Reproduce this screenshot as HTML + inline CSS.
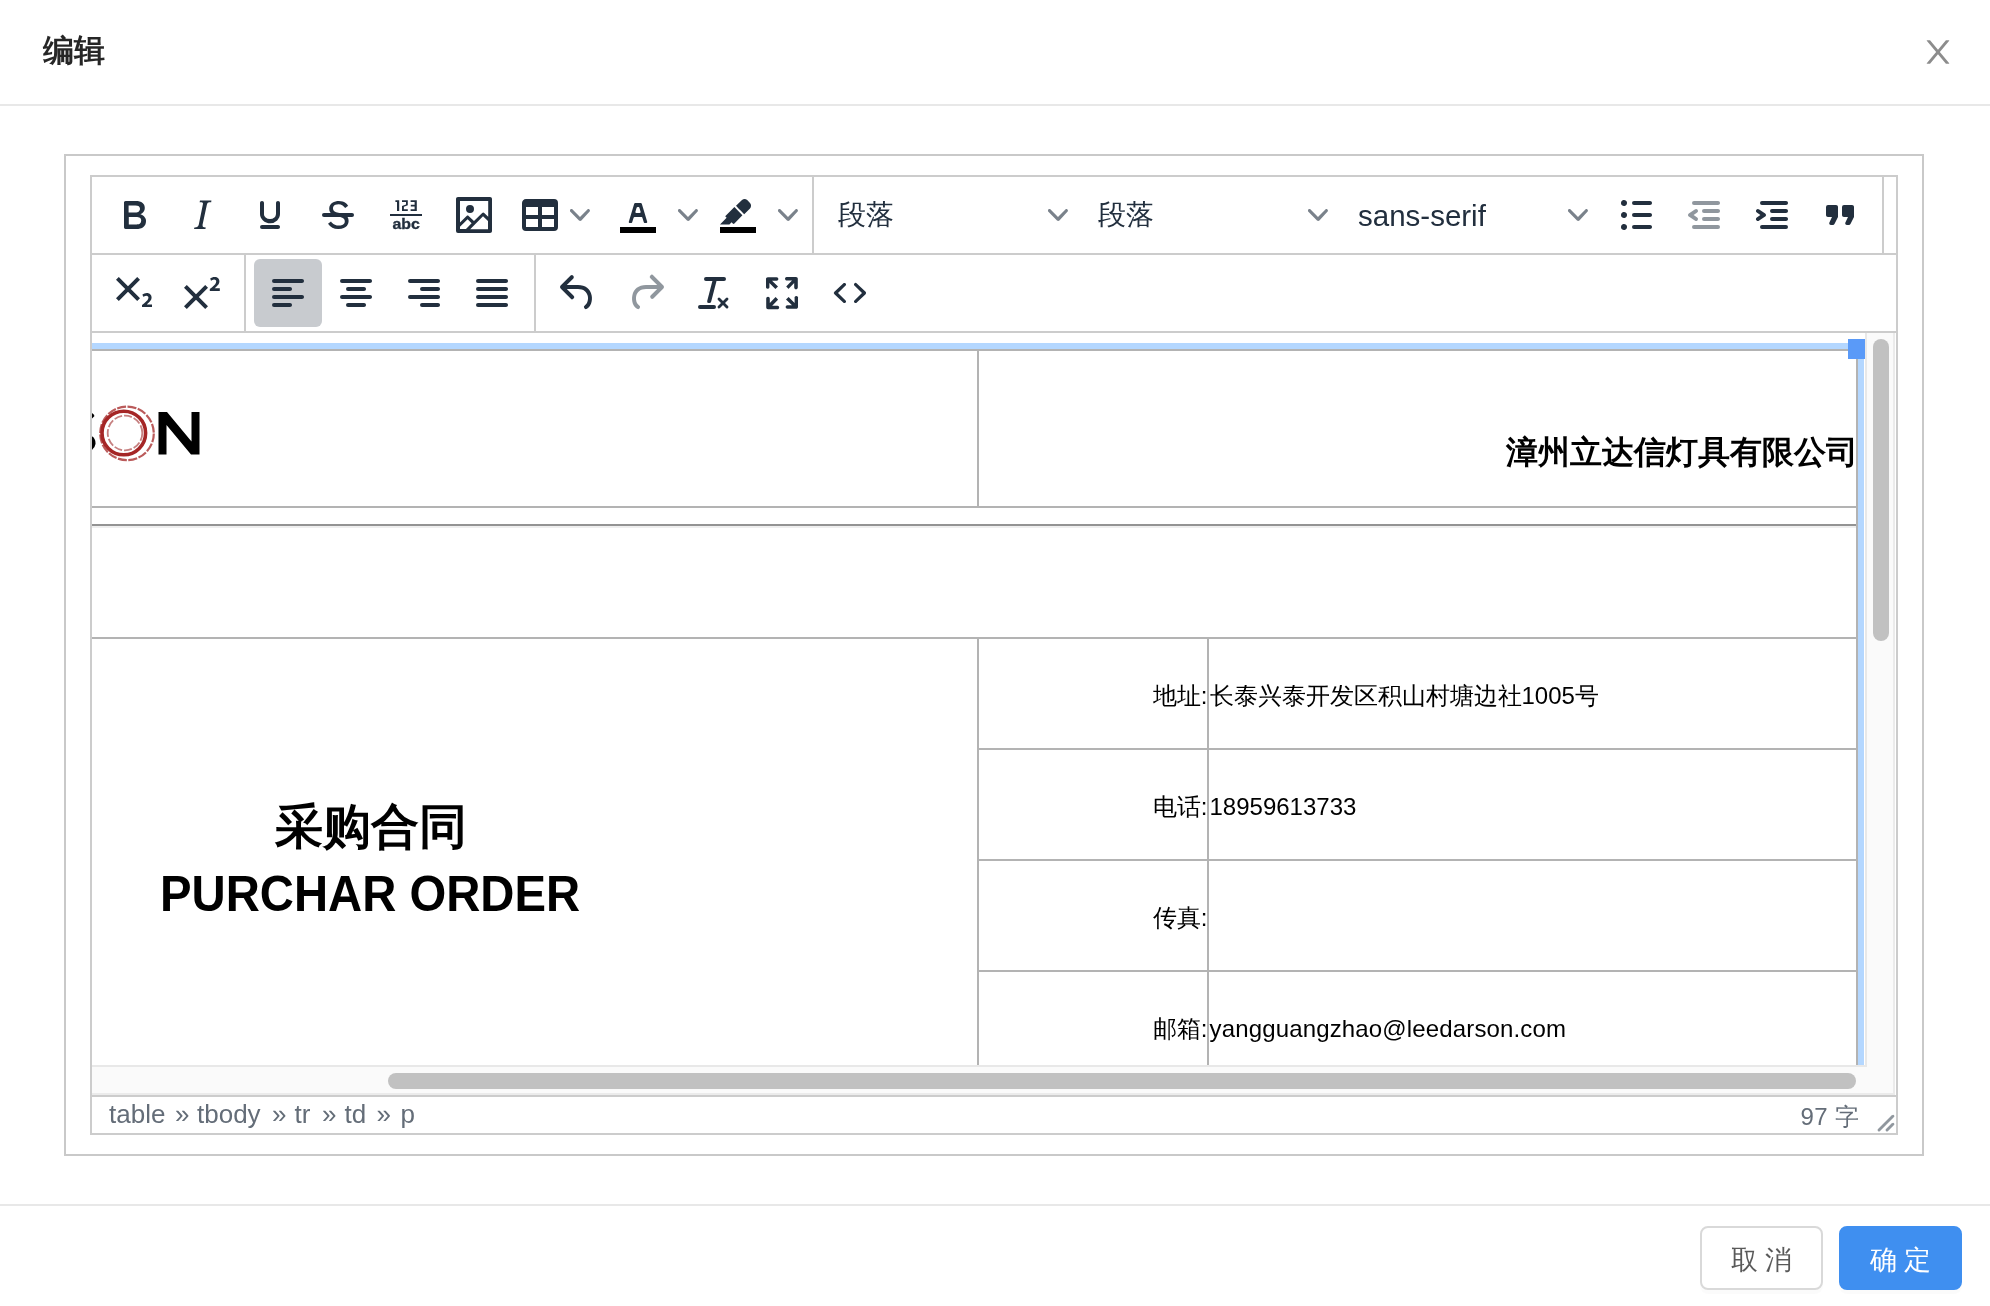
<!DOCTYPE html>
<html><head><meta charset="utf-8"><title>编辑</title>
<style>
html,body{margin:0;padding:0}
body{width:1990px;height:1306px;background:#fff;position:relative;overflow:hidden;font-family:"Liberation Sans",sans-serif;}
#wrap{position:absolute;left:0;top:0;width:1990px;height:1306px;will-change:transform}
.a{position:absolute}
.ln{position:absolute;background:#ccc}
.ic{position:absolute;width:48px;height:48px;fill:#222f3e}
.ic.dis{fill:rgba(34,47,62,.5)}
.chev{position:absolute;width:20px;height:20px;fill:#7a828b}
.lbl{position:absolute;font-size:28px;color:#222f3e;white-space:nowrap;line-height:40px}
#title{left:43px;top:29px;font-size:31px;font-weight:bold;color:rgba(0,0,0,.85);line-height:44px}
.btn{position:absolute;top:1226px;height:64px;box-sizing:border-box;border-radius:8px;font-size:26.5px;font-weight:500;text-align:center;line-height:64px;box-shadow:0 4px 0 rgba(0,0,0,.015)}
#content{position:absolute;left:92px;top:333px;width:1773px;height:732px;overflow:hidden;background:#fff}
#content .t{position:absolute;white-space:nowrap;color:#000}
.tl{position:absolute;background:#b3b3b3}
.cell{position:absolute;font-size:24px;line-height:34px;color:#000;white-space:nowrap}
.sbw{position:absolute;top:1097px;height:36px;line-height:34px;font-size:26px;color:#646d78;white-space:nowrap}
</style></head>
<body><div id="wrap">
<!-- header -->
<div id="title" class="a">编辑</div>
<svg class="a" style="left:1922px;top:36px;width:32px;height:32px;fill:rgba(0,0,0,.45)" viewBox="64 64 896 896"><path d="M563.8 512l262.5-312.9c4.4-5.2.7-13.1-6.1-13.1h-79.8c-4.7 0-9.2 2.1-12.3 5.7L511.6 449.8 295.1 191.7c-3-3.6-7.5-5.7-12.3-5.7H203c-6.8 0-10.5 7.9-6.1 13.1L459.4 512 196.9 824.9A7.95 7.95 0 0 0 203 838h79.8c4.7 0 9.2-2.1 12.3-5.7l216.5-258.1 216.5 258.1c3 3.6 7.5 5.7 12.3 5.7h79.8c6.8 0 10.5-7.9 6.1-13.1L563.8 512z"/></svg>
<div class="ln" style="left:0;top:104px;width:1990px;height:2px;background:#e8e8e8"></div>

<!-- outer box -->
<div class="a" style="left:64px;top:154px;width:1860px;height:1002px;box-sizing:border-box;border:2px solid #c9c9c9"></div>
<!-- tinymce box -->
<div class="a" style="left:90px;top:175px;width:1808px;height:960px;box-sizing:border-box;border:2px solid #ccc"></div>

<!-- TOOLBAR -->
<div class="ln" style="left:92px;top:253px;width:1804px;height:2px"></div>
<div class="ln" style="left:92px;top:331px;width:1804px;height:2px"></div>
<div class="ln" style="left:812px;top:177px;width:2px;height:76px"></div>
<div class="ln" style="left:1882px;top:177px;width:2px;height:76px"></div>
<div class="ln" style="left:244px;top:255px;width:2px;height:76px"></div>
<div class="ln" style="left:534px;top:255px;width:2px;height:76px"></div>
<!--TB--><svg class="ic" style="left:110px;top:191px" viewBox="0 0 24 24"><path d="M7.8 19c-.3 0-.5 0-.6-.2l-.2-.5V5.7c0-.2 0-.4.2-.5l.6-.2h5c1.5 0 2.7.3 3.5 1 .7.6 1.1 1.4 1.1 2.5a3 3 0 01-.6 1.9c-.4.6-1 1-1.6 1.2.4.1.9.3 1.3.6s.8.7 1 1.2c.4.4.5 1 .5 1.6 0 1.3-.4 2.3-1.3 3-.8.7-2.1 1-3.8 1H7.8zm5-8.3c.6 0 1.2-.1 1.6-.5.4-.3.6-.7.6-1.3 0-1.1-.8-1.7-2.3-1.7H9.3v3.5h3.4zm.5 6c.7 0 1.3-.1 1.7-.4.4-.4.6-.9.6-1.5s-.2-1-.7-1.4c-.4-.3-1-.4-2-.4H9.4v3.8h4z" fill-rule="evenodd"/></svg>
<svg class="ic" style="left:178px;top:191px" viewBox="0 0 24 24"><path d="M16.7 4.7l-.1.9h-.3c-.6 0-1 0-1.4.3-.3.3-.4.6-.5 1.1l-2.1 9.8v.6c0 .5.4.8 1.4.8h.2l-.2.8H8l.2-.8h.2c1.1 0 1.8-.5 2-1.5l2-9.8.1-.5c0-.6-.4-.8-1.4-.8h-.3l.2-.9h5.8z" fill-rule="evenodd"/></svg>
<svg class="ic" style="left:246px;top:191px" viewBox="0 0 24 24"><path d="M16 5c.6 0 1 .4 1 1v5.5a4 4 0 01-.4 1.8l-1 1.4a5.3 5.3 0 01-5.5 1 5 5 0 01-1.6-1c-.5-.4-.8-.9-1.1-1.4a4 4 0 01-.4-1.8V6c0-.6.4-1 1-1s1 .4 1 1v5.5c0 .3 0 .6.2 1l.6.7a3.3 3.3 0 002.2.8 3.4 3.4 0 002.2-.8c.3-.2.5-.5.6-.8l.2-.9V6c0-.6.4-1 1-1zM8 17h8c.6 0 1 .4 1 1s-.4 1-1 1H8a1 1 0 010-2z" fill-rule="evenodd"/></svg>
<svg class="ic" style="left:314px;top:191px" viewBox="0 0 24 24"><g fill-rule="evenodd"><path d="M15.6 8.5c-.5-.7-1-1.1-1.3-1.3-.6-.4-1.3-.6-2-.6-2.7 0-2.8 1.7-2.8 2.1 0 1.6 1.8 2 3.2 2.3 4.4.9 4.6 2.8 4.6 3.9 0 1.4-.7 4.1-5 4.1A6.2 6.2 0 017 16.4l1.5-1.1c.4.6 1.6 2 3.7 2 1.6 0 2.5-.4 3-1.2.4-.8.3-2-.8-2.6-.7-.4-1.6-.7-2.9-1-1-.2-3.9-.8-3.9-3.6C7.6 6 10.3 5 12.4 5c2.9 0 4.2 1.6 4.7 2.4l-1.5 1.1z"/><path d="M5 11h14a1 1 0 010 2H5a1 1 0 010-2z" fill-rule="nonzero"/></g></svg>
<svg class="ic" style="left:382px;top:191px" viewBox="0 0 24 24"><g><path d="M4 11.5h16v1H4z"/><path d="M6.7 4.65H8.6V9.95H7.5V5.5H6.7Z"/><path d="M10 4.6H12.9V7.1L10.95 7.9V9.1H12.9V9.95H10V7.5L12 6.7V5.5H10Z"/><path d="M14.3 4.6H17.4V9.95H14.3V9.1H16.3V7.75H14.4V6.9H16.3V5.5H14.3Z"/><text transform="translate(12.05 19) scale(1.12 1)" text-anchor="middle" font-family="Liberation Sans" font-weight="bold" font-size="7.1" stroke="#222f3e" stroke-width=".15">abc</text></g></svg>
<svg class="ic" style="left:450px;top:191px" viewBox="0 0 24 24"><path d="M5 15.7l3.3-3.2c.3-.3.7-.3 1 0L12 15l4.1-4c.3-.4.8-.4 1 0l2 1.9V5H5v10.7zM5 18V19h3l2.8-2.9-2-2L5 17.9zm14-3l-2.5-2.4-6.4 6.5H19v-4zM4 3h16c.6 0 1 .4 1 1v16c0 .6-.4 1-1 1H4a1 1 0 01-1-1V4c0-.6.4-1 1-1zm6 8a2 2 0 100-4 2 2 0 000 4z" fill-rule="nonzero"/></svg>
<svg class="ic" style="left:516px;top:191px" viewBox="0 0 24 24"><path d="M19 4a2 2 0 012 2v12a2 2 0 01-2 2H5a2 2 0 01-2-2V6c0-1.1.9-2 2-2h14zM5 14v4h6v-4H5zm14 0h-6v4h6v-4zm0-6h-6v4h6V8zM5 12h6V8H5v4z" fill-rule="nonzero"/></svg>
<svg class="chev" style="left:570px;top:205px" viewBox="0 0 10 10"><path d="M8.7 2.2c.3-.3.8-.3 1 0 .4.4.4.9 0 1.2L5.7 7.8c-.3.3-.9.3-1.2 0L.2 3.4a.8.8 0 010-1.2c.3-.3.8-.3 1.1 0L5 6l3.7-3.8z" fill-rule="nonzero"/></svg>
<svg class="ic" style="left:614px;top:191px" viewBox="0 0 24 24"><g fill-rule="evenodd"><path d="M3 18h18v3H3z" fill="#000"/><path d="M8.7 16h-.8a.5.5 0 01-.5-.6l2.7-9c.1-.3.3-.4.5-.4h2.8c.2 0 .4.1.5.4l2.7 9a.5.5 0 01-.5.6h-.8a.5.5 0 01-.4-.4l-.7-2.2c0-.3-.3-.4-.5-.4h-3.4c-.2 0-.4.1-.5.4l-.7 2.2c0 .3-.2.4-.4.4zm2.6-7.6l-.6 2a.5.5 0 00.5.6h1.6a.5.5 0 00.5-.6l-.6-2c0-.3-.3-.4-.5-.4h-.4c-.2 0-.4.1-.5.4z"/></g></svg>
<svg class="chev" style="left:678px;top:205px" viewBox="0 0 10 10"><path d="M8.7 2.2c.3-.3.8-.3 1 0 .4.4.4.9 0 1.2L5.7 7.8c-.3.3-.9.3-1.2 0L.2 3.4a.8.8 0 010-1.2c.3-.3.8-.3 1.1 0L5 6l3.7-3.8z" fill-rule="nonzero"/></svg>
<svg class="ic" style="left:714px;top:191px" viewBox="0 0 24 24"><g fill-rule="evenodd"><path d="M3 18h18v3H3z" fill="#000"/><path fill-rule="nonzero" d="M7.7 16.7H3l3.3-3.3-.7-.8L10.2 8l4 4.1-4 4.2c-.2.2-.6.2-.8 0l-.6-.7-1.1 1.1zm5-7.5L11 7.4l3-2.9a2 2 0 012.6 0L18 6c.7.7.7 2 0 2.7l-2.9 2.9-1.8-1.8-.5-.6"/></g></svg>
<svg class="chev" style="left:778px;top:205px" viewBox="0 0 10 10"><path d="M8.7 2.2c.3-.3.8-.3 1 0 .4.4.4.9 0 1.2L5.7 7.8c-.3.3-.9.3-1.2 0L.2 3.4a.8.8 0 010-1.2c.3-.3.8-.3 1.1 0L5 6l3.7-3.8z" fill-rule="nonzero"/></svg>
<svg class="chev" style="left:1048px;top:205px" viewBox="0 0 10 10"><path d="M8.7 2.2c.3-.3.8-.3 1 0 .4.4.4.9 0 1.2L5.7 7.8c-.3.3-.9.3-1.2 0L.2 3.4a.8.8 0 010-1.2c.3-.3.8-.3 1.1 0L5 6l3.7-3.8z" fill-rule="nonzero"/></svg>
<svg class="chev" style="left:1308px;top:205px" viewBox="0 0 10 10"><path d="M8.7 2.2c.3-.3.8-.3 1 0 .4.4.4.9 0 1.2L5.7 7.8c-.3.3-.9.3-1.2 0L.2 3.4a.8.8 0 010-1.2c.3-.3.8-.3 1.1 0L5 6l3.7-3.8z" fill-rule="nonzero"/></svg>
<svg class="chev" style="left:1568px;top:205px" viewBox="0 0 10 10"><path d="M8.7 2.2c.3-.3.8-.3 1 0 .4.4.4.9 0 1.2L5.7 7.8c-.3.3-.9.3-1.2 0L.2 3.4a.8.8 0 010-1.2c.3-.3.8-.3 1.1 0L5 6l3.7-3.8z" fill-rule="nonzero"/></svg>
<div class="lbl" style="left:838px;top:195px">段落</div>
<div class="lbl" style="left:1098px;top:195px">段落</div>
<div class="lbl" style="left:1358px;top:196px;font-size:29.5px">sans-serif</div>
<svg class="ic" style="left:1612px;top:191px" viewBox="0 0 24 24"><path d="M11 5h8c.6 0 1 .4 1 1s-.4 1-1 1h-8a1 1 0 010-2zm0 6h8c.6 0 1 .4 1 1s-.4 1-1 1h-8a1 1 0 010-2zm0 6h8c.6 0 1 .4 1 1s-.4 1-1 1h-8a1 1 0 010-2zM4.5 6c0-.4.1-.8.4-1 .3-.4.7-.5 1.1-.5.4 0 .8.1 1 .4.4.3.5.7.5 1.1 0 .4-.1.8-.4 1-.3.4-.7.5-1.1.5-.4 0-.8-.1-1-.4-.4-.3-.5-.7-.5-1.1zm0 6c0-.4.1-.8.4-1 .3-.4.7-.5 1.1-.5.4 0 .8.1 1 .4.4.3.5.7.5 1.1 0 .4-.1.8-.4 1-.3.4-.7.5-1.1.5-.4 0-.8-.1-1-.4-.4-.3-.5-.7-.5-1.1zm0 6c0-.4.1-.8.4-1 .3-.4.7-.5 1.1-.5.4 0 .8.1 1 .4.4.3.5.7.5 1.1 0 .4-.1.8-.4 1-.3.4-.7.5-1.1.5-.4 0-.8-.1-1-.4-.4-.3-.5-.7-.5-1.1z" fill-rule="evenodd"/></svg>
<svg class="ic dis" style="left:1680px;top:191px" viewBox="0 0 24 24"><path d="M7 5h12c.6 0 1 .4 1 1s-.4 1-1 1H7a1 1 0 110-2zm5 4h7c.6 0 1 .4 1 1s-.4 1-1 1h-7a1 1 0 010-2zm0 4h7c.6 0 1 .4 1 1s-.4 1-1 1h-7a1 1 0 010-2zm-5 4h12a1 1 0 010 2H7a1 1 0 010-2zm1.6-3.8a1 1 0 01-1.2 1.6l-3-2a1 1 0 010-1.6l3-2a1 1 0 011.2 1.6L6.8 12l1.8 1.2z" fill-rule="evenodd"/></svg>
<svg class="ic" style="left:1748px;top:191px" viewBox="0 0 24 24"><path d="M7 5h12c.6 0 1 .4 1 1s-.4 1-1 1H7a1 1 0 110-2zm5 4h7c.6 0 1 .4 1 1s-.4 1-1 1h-7a1 1 0 010-2zm0 4h7c.6 0 1 .4 1 1s-.4 1-1 1h-7a1 1 0 010-2zm-5 4h12a1 1 0 010 2H7a1 1 0 010-2zm-2.6-3.8L6.2 12l-1.8-1.2a1 1 0 011.2-1.6l3 2a1 1 0 010 1.6l-3 2a1 1 0 11-1.2-1.6z" fill-rule="evenodd"/></svg>
<svg class="ic" style="left:1816px;top:191px" viewBox="0 0 24 24"><path d="M7.5 17h.9c.4 0 .7-.2.9-.6L11 13V8c0-.6-.4-1-1-1H6a1 1 0 00-1 1v4c0 .6.4 1 1 1h2l-1.3 2.7a1 1 0 00.8 1.3zm8 0h.9c.4 0 .7-.2.9-.6L19 13V8c0-.6-.4-1-1-1h-4a1 1 0 00-1 1v4c0 .6.4 1 1 1h2l-1.3 2.7a1 1 0 00.8 1.3z" fill-rule="nonzero"/></svg>
<div class="a" style="left:254px;top:259px;width:68px;height:68px;border-radius:6px;background:#c8cbcf"></div>
<svg class="ic" style="left:110px;top:269px" viewBox="0 0 24 24"><path d="M10.4 10l4.6 4.6-1.4 1.4L9 11.4 4.4 16 3 14.6 7.6 10 3 5.4 4.4 4 9 8.6 13.6 4 15 5.4 10.4 10zM21 19h-5v-1l1-.8 1.7-1.6c.3-.4.5-.8.5-1.2 0-.3 0-.6-.2-.7-.2-.2-.5-.3-.9-.3a2 2 0 00-.8.2l-.7.3-.4-1.1 1-.6 1.2-.2c.8 0 1.4.3 1.8.7.4.4.6.9.6 1.5s-.2 1.1-.5 1.6a8 8 0 01-1.3 1.3l-.6.6h2.6V19z" fill-rule="nonzero"/></svg>
<svg class="ic" style="left:178px;top:269px" viewBox="0 0 24 24"><path d="M15 9.4L10.4 14l4.6 4.6-1.4 1.4L9 15.4 4.4 20 3 18.6 7.6 14 3 9.4 4.4 8 9 12.6 13.6 8 15 9.4zm5.9 1.6h-5v-1l1-.8 1.7-1.6c.3-.5.5-.9.5-1.3 0-.3 0-.5-.2-.7-.2-.2-.5-.3-.9-.3l-.8.2-.7.4-.4-1.2c.2-.2.5-.4 1-.5.3-.2.8-.2 1.2-.2.8 0 1.4.2 1.8.6.4.4.6 1 .6 1.6 0 .5-.2 1-.5 1.5l-1.3 1.4-.6.5h2.6V11z" fill-rule="nonzero"/></svg>
<svg class="ic" style="left:264px;top:269px" viewBox="0 0 24 24"><path d="M5 5h14c.6 0 1 .4 1 1s-.4 1-1 1H5a1 1 0 110-2zm0 4h8c.6 0 1 .4 1 1s-.4 1-1 1H5a1 1 0 110-2zm0 8h8c.6 0 1 .4 1 1s-.4 1-1 1H5a1 1 0 010-2zm0-4h14c.6 0 1 .4 1 1s-.4 1-1 1H5a1 1 0 010-2z" fill-rule="evenodd"/></svg>
<svg class="ic" style="left:332px;top:269px" viewBox="0 0 24 24"><path d="M5 5h14c.6 0 1 .4 1 1s-.4 1-1 1H5a1 1 0 110-2zm3 4h8c.6 0 1 .4 1 1s-.4 1-1 1H8a1 1 0 110-2zm0 8h8c.6 0 1 .4 1 1s-.4 1-1 1H8a1 1 0 010-2zm-3-4h14c.6 0 1 .4 1 1s-.4 1-1 1H5a1 1 0 010-2z" fill-rule="evenodd"/></svg>
<svg class="ic" style="left:400px;top:269px" viewBox="0 0 24 24"><path d="M5 5h14c.6 0 1 .4 1 1s-.4 1-1 1H5a1 1 0 110-2zm6 4h8c.6 0 1 .4 1 1s-.4 1-1 1h-8a1 1 0 010-2zm0 8h8c.6 0 1 .4 1 1s-.4 1-1 1h-8a1 1 0 010-2zm-6-4h14c.6 0 1 .4 1 1s-.4 1-1 1H5a1 1 0 010-2z" fill-rule="evenodd"/></svg>
<svg class="ic" style="left:468px;top:269px" viewBox="0 0 24 24"><path d="M5 5h14c.6 0 1 .4 1 1s-.4 1-1 1H5a1 1 0 110-2zm0 4h14c.6 0 1 .4 1 1s-.4 1-1 1H5a1 1 0 110-2zm0 4h14c.6 0 1 .4 1 1s-.4 1-1 1H5a1 1 0 010-2zm0 4h14c.6 0 1 .4 1 1s-.4 1-1 1H5a1 1 0 010-2z" fill-rule="evenodd"/></svg>
<svg class="ic" style="left:554px;top:269px" viewBox="0 0 24 24"><path d="M6.4 8H12c3.7 0 6.2 2 6.8 5.1.6 2.7-.4 5.6-2.3 6.8a1 1 0 01-1-1.8c1.1-.6 1.8-2.7 1.4-4.6-.5-2.1-2.1-3.5-4.9-3.5H6.4l3.3 3.3a1 1 0 11-1.4 1.4l-5-5a1 1 0 010-1.4l5-5a1 1 0 011.4 1.4L6.4 8z" fill-rule="nonzero"/></svg>
<svg class="ic dis" style="left:622px;top:269px" viewBox="0 0 24 24"><path d="M17.6 10H12c-2.8 0-4.4 1.4-4.9 3.5-.4 2 .3 4 1.4 4.6a1 1 0 11-1 1.8c-2-1.2-2.9-4.1-2.3-6.8.6-3 3-5.1 6.8-5.1h5.6l-3.3-3.3a1 1 0 111.4-1.4l5 5a1 1 0 010 1.4l-5 5a1 1 0 01-1.4-1.4l3.3-3.3z" fill-rule="nonzero"/></svg>
<svg class="ic" style="left:690px;top:269px" viewBox="0 0 24 24"><path d="M13.2 6a1 1 0 010 .2l-2.6 10a1 1 0 01-1 .8h-.2a.8.8 0 01-.8-1l2.6-10H8a1 1 0 110-2h9a1 1 0 010 2h-3.8zM5 18h7a1 1 0 010 2H5a1 1 0 010-2zm13 1.5L16.5 18 15 19.5a.7.7 0 01-1-1l1.5-1.5-1.5-1.5a.7.7 0 011-1l1.5 1.5 1.5-1.5a.7.7 0 011 1L17.5 17l1.5 1.5a.7.7 0 01-1 1z" fill-rule="evenodd"/></svg>
<svg class="ic" style="left:758px;top:269px" viewBox="0 0 24 24"><path d="M15.3 10l-1.2-1.3 2.9-3h-2.3a.9.9 0 110-1.7H19c.5 0 .9.4.9.9v4.4a.9.9 0 11-1.8 0V7l-2.9 3zm0 4l3 3v-2.3a.9.9 0 111.7 0V19c0 .5-.4.9-.9.9h-4.4a.9.9 0 110-1.8H17l-3-2.9 1.3-1.2zM10 15.4l-2.9 3h2.3a.9.9 0 110 1.7H5a.9.9 0 01-.9-.9v-4.4a.9.9 0 111.8 0V17l2.9-3 1.2 1.3zM8.7 10L5.7 7v2.3a.9.9 0 01-1.7 0V5c0-.5.4-.9.9-.9h4.4a.9.9 0 010 1.8H7l3 2.9-1.3 1.2z" fill-rule="nonzero"/></svg>
<svg class="ic" style="left:826px;top:269px" viewBox="0 0 24 24"><g fill-rule="nonzero"><path d="M9.8 15.7c.3.3.3.8 0 1-.3.4-.9.4-1.2 0l-4.4-4.1a.8.8 0 010-1.2l4.4-4.2c.3-.3.9-.3 1.2 0 .3.3.3.8 0 1.1L6 12l3.8 3.7zM14.2 15.7c-.3.3-.3.8 0 1 .4.4.9.4 1.2 0l4.4-4.1c.3-.3.3-.9 0-1.2l-4.4-4.2a.8.8 0 00-1.2 0c-.3.3-.3.8 0 1.1L18 12l-3.8 3.7z"/></g></svg><!--/TB-->

<!-- CONTENT -->
<div id="content">
<!--CT--><div class="a" style="left:0px;top:10px;width:1772px;height:6px;background:#b4d7ff"></div>
<div class="a" style="left:1766px;top:10px;width:6px;height:722px;background:#b4d7ff"></div>
<div class="a" style="left:0px;top:16px;width:1766px;height:2px;background:#b3b3b3"></div>
<div class="a" style="left:1764px;top:16px;width:2px;height:716px;background:#b3b3b3"></div>
<div class="a" style="left:0px;top:173px;width:1764px;height:2px;background:#b3b3b3"></div>
<div class="a" style="left:885px;top:18px;width:2px;height:155px;background:#b3b3b3"></div>
<div class="a" style="left:0px;top:191px;width:1764px;height:2px;background:#939393"></div>
<div class="a" style="left:0px;top:193px;width:1764px;height:2px;background:#efefef"></div>
<div class="a" style="left:0px;top:304px;width:1764px;height:2px;background:#b3b3b3"></div>
<div class="a" style="left:885px;top:306px;width:2px;height:426px;background:#b3b3b3"></div>
<div class="a" style="left:1115px;top:306px;width:2px;height:426px;background:#b3b3b3"></div>
<div class="a" style="left:887px;top:415px;width:877px;height:2px;background:#b3b3b3"></div>
<div class="a" style="left:887px;top:526px;width:877px;height:2px;background:#b3b3b3"></div>
<div class="a" style="left:887px;top:637px;width:877px;height:2px;background:#b3b3b3"></div>
<div class="a" style="left:1756px;top:6px;width:20px;height:20px;background:#5a9af8"></div>
<svg class="a" style="left:0;top:0;width:200px;height:200px;overflow:visible" viewBox="92 333 200 200">
<path d="M86 412 q6 -1 8.5 4 l-3 3z" fill="#000"/>
<path d="M86 434 q10 2 9.5 10 q-1 7 -9.5 7z" fill="#000"/>
<circle cx="127" cy="433.4" r="26.8" fill="none" stroke="#b24848" stroke-width="2.2" stroke-dasharray="9 1.5" opacity=".9"/>
<circle cx="123.8" cy="433" r="21.8" fill="none" stroke="#a52626" stroke-width="3.6"/>
<circle cx="125" cy="433" r="17.3" fill="none" stroke="#b86060" stroke-width="1.8" stroke-dasharray="8 2" opacity=".8"/>
<path d="M158.5 412H167L191.5 441.5V412H199.5V454.5H191L166.5 425V454.5H158.5Z" fill="#000"/>
</svg>
<div class="t" style="right:7.5px;top:94px;font-size:32px;font-weight:bold;line-height:50px">漳州立达信灯具有限公司</div>
<div class="t" style="left:183px;top:466px;font-size:48px;font-weight:bold;line-height:56px">采购合同</div>
<div class="t" style="left:67.5px;top:533px;font-size:50px;font-weight:bold;line-height:56px;transform:scaleX(.945);transform-origin:0 0">PURCHAR ORDER</div>
<div class="cell" style="right:657.5px;top:346px;text-align:right">地址:</div>
<div class="cell" style="left:1117.5px;top:346px;">长泰兴泰开发区积山村塘边社1005号</div>
<div class="cell" style="right:657.5px;top:457px;text-align:right">电话:</div>
<div class="cell" style="left:1117.5px;top:457px;">18959613733</div>
<div class="cell" style="right:657.5px;top:568px;text-align:right">传真:</div>
<div class="cell" style="left:1117.5px;top:568px;"></div>
<div class="cell" style="right:657.5px;top:679px;text-align:right">邮箱:</div>
<div class="cell" style="left:1117.5px;top:679px;letter-spacing:.15px">yangguangzhao@leedarson.com</div><!--/CT-->
</div>
<!--SB--><div class="a" style="left:1865px;top:333px;width:30px;height:762px;background:#fafafa;box-sizing:border-box;border-right:2px solid #ebebeb;border-bottom:2px solid #ebebeb"></div>
<div class="a" style="left:1865px;top:333px;width:2px;height:734px;background:#e8e8e8"></div>
<div class="a" style="left:92px;top:1065px;width:1773px;height:30px;background:#fafafa;box-sizing:border-box;border-top:2px solid #e8e8e8;border-bottom:2px solid #ebebeb"></div>
<div class="a" style="left:1873px;top:339px;width:16px;height:302px;border-radius:8px;background:#c1c1c1"></div>
<div class="a" style="left:388px;top:1073px;width:1468px;height:16px;border-radius:8px;background:#c1c1c1"></div><!--/SB-->

<!-- statusbar -->
<div class="ln" style="left:92px;top:1095px;width:1804px;height:2px"></div>
<div class="sbw" style="left:109px">table</div><div class="sbw" style="left:175px">»</div><div class="sbw" style="left:197px">tbody</div><div class="sbw" style="left:272px">»</div><div class="sbw" style="left:294.5px">tr</div><div class="sbw" style="left:322px">»</div><div class="sbw" style="left:344.5px">td</div><div class="sbw" style="left:376.5px">»</div><div class="sbw" style="left:400.5px">p</div>
<div class="a" style="right:131px;top:1099px;height:36px;line-height:36px;font-size:24px;color:#646d78;white-space:nowrap"><span style="letter-spacing:.6px">97</span> 字</div>
<svg class="a" style="left:1876px;top:1113px;width:20px;height:20px;fill:rgba(34,47,62,.5)" viewBox="0 0 10 10"><path d="M8.1 1.1A.5.5 0 119 2l-7 7A.5.5 0 111 8l7-7zM8.1 5.1A.5.5 0 119 6l-3 3A.5.5 0 115 8l3-3z"/></svg>

<!-- footer -->
<div class="ln" style="left:0;top:1204px;width:1990px;height:2px;background:#e8e8e8"></div>
<div class="btn" style="left:1700px;width:123px;border:2px solid #d9d9d9;background:#fff;color:rgba(0,0,0,.65)">取 消</div>
<div class="btn" style="left:1839px;width:123px;border:2px solid #3f8ff0;background:#3f8ff0;color:#fff">确 定</div>
</div></body></html>
